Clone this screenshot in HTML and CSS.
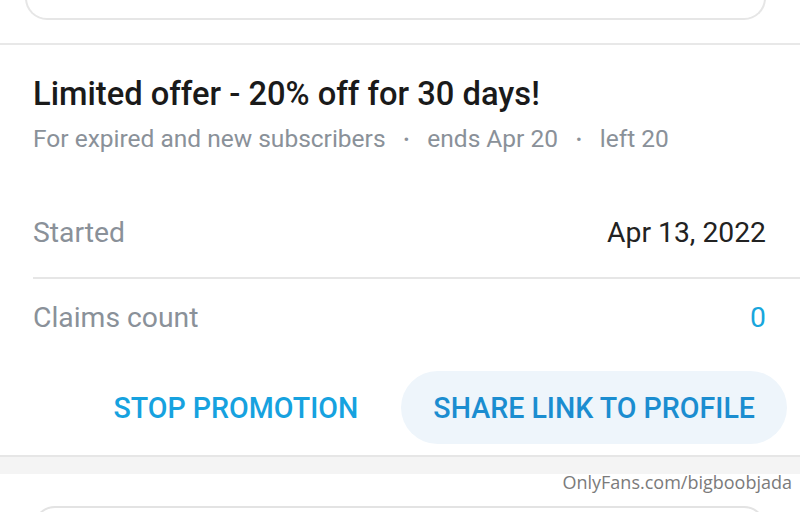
FILE: index.html
```html
<!DOCTYPE html>
<html>
<head>
<meta charset="utf-8">
<link rel="stylesheet" href="styles.css">
</head>
<body>
<div class="page">
  <div class="top-card"></div>
  <div class="sep"></div>
  <section class="offer">
    <h1 class="title">Limited offer - 20% off for 30 days!</h1>
    <div class="meta">
      <span>For expired and new subscribers</span>
      <span class="dot">•</span>
      <span>ends Apr 20</span>
      <span class="dot">•</span>
      <span>left 20</span>
    </div>
    <div class="rows">
      <div class="row row-first">
        <span class="label">Started</span>
        <span class="value">Apr 13, 2022</span>
      </div>
      <div class="row row-second">
        <span class="label">Claims count</span>
        <span class="value value-link">0</span>
      </div>
    </div>
  </section>
  <div class="actions">
    <button class="btn">STOP PROMOTION</button>
    <button class="btn btn-fill">SHARE LINK TO PROFILE</button>
  </div>
  <div class="band"></div>
  <div class="bottom">
    <div class="bottom-card"></div>
    <div class="watermark">OnlyFans.com/bigboobjada</div>
  </div>
</div>
</body>
</html>
```

FILE: styles.css
```css
* { box-sizing: border-box; }
html, body { margin: 0; padding: 0; background: #fff; }
body {
  width: 800px;
  height: 512px;
  overflow: hidden;
  font-family: Roboto, "Noto Sans", sans-serif;
}
.page { display: flex; flex-direction: column; }
.top-card {
  height: 22px;
  margin: -2px 34px 0 25px;
  border: 2px solid #e6e6e6;
  border-top: none;
  border-radius: 0 0 22px 22px;
}
.sep {
  margin-top: 23px;
  height: 2px;
  background: #e8e8e8;
}
.offer {
  padding: 31px 34px 0 33px;
  display: flex;
  flex-direction: column;
}
.title {
  margin: 0;
  font-size: 32.7px;
  line-height: 36px;
  font-weight: 500;
  color: #1a1a1a;
}
.meta {
  margin-top: 13px;
  font-size: 24.5px;
  line-height: 28px;
  color: #8a9199;
  display: flex;
  align-items: center;
  gap: 18px;
}
.dot { font-size: 17px; }
.rows {
  margin-top: 41px;
  margin-right: -34px;
}
.row {
  display: flex;
  justify-content: space-between;
  align-items: flex-start;
  padding: 22px 34px 0 0;
  font-size: 28.3px;
  line-height: 34px;
}
.row-first { height: 85px; border-bottom: 2px solid #e6e6e6; }
.row-second { height: 78px; }
.label { color: #8a9199; }
.value { color: #222; }
.value-link { color: #18a6dc; }
.actions {
  margin-top: 14px;
  display: flex;
  justify-content: flex-end;
  gap: 11px;
  padding-right: 13px;
}
.btn {
  height: 73px;
  padding: 0 32px;
  border: none;
  border-radius: 37px;
  background: transparent;
  font-family: Roboto, "Noto Sans", sans-serif;
  font-weight: 500;
  font-size: 28.6px;
  color: #16a2df;
}
.btn-fill {
  background: #eef5fb;
  color: #1b8dd0;
}
.band {
  margin-top: 11px;
  height: 19px;
  border-top: 2px solid #e6e6e6;
  background: #f4f4f4;
}
.bottom {
  position: relative;
  height: 40px;
  padding-top: 32px;
}
.bottom-card {
  margin: 0 34px 0 33px;
  height: 30px;
  border: 2px solid #e3e3e3;
  border-radius: 22px 22px 0 0;
}
.watermark {
  position: absolute;
  right: 8px;
  top: -4px;
  font-family: "Open Sans", sans-serif;
  font-size: 18px;
  color: #7b7b7b;
}
```
